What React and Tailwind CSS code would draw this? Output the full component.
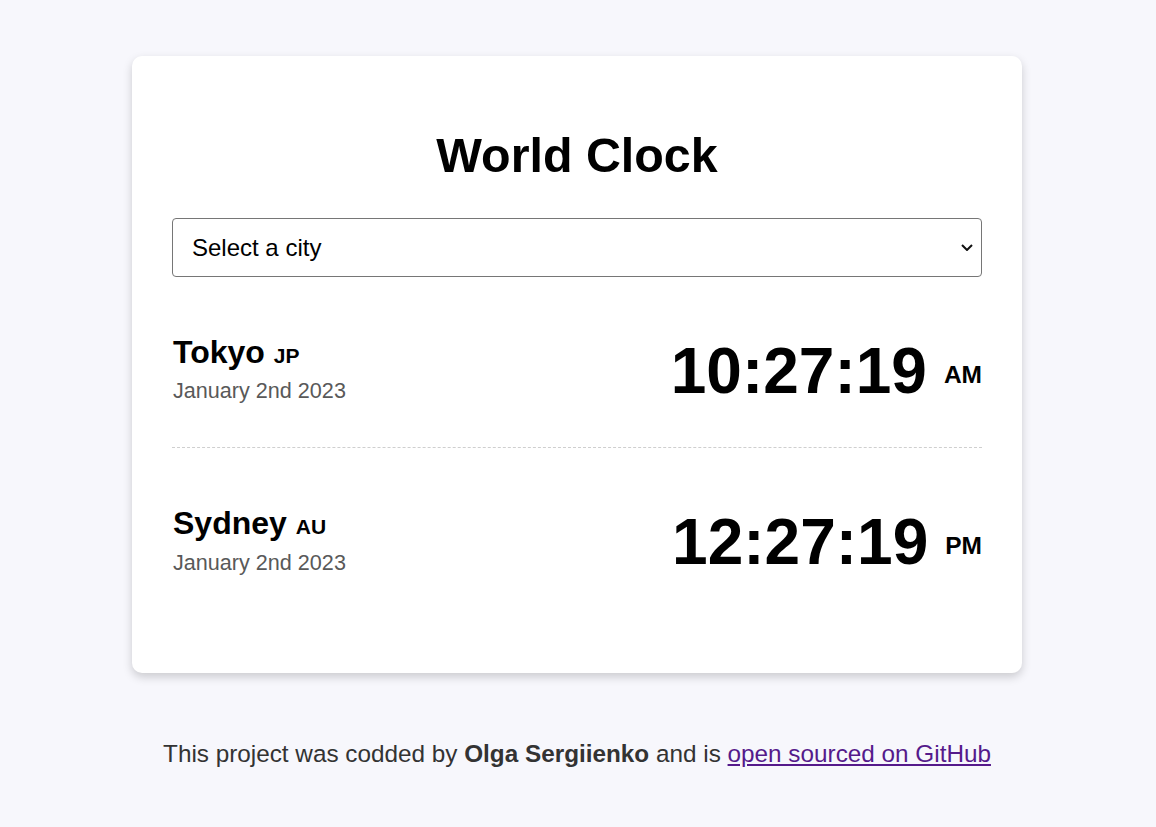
import { useState } from "react"

const cities = [
  { name: "Tokyo", code: "JP", date: "January 2nd 2023", time: "10:27:19", ampm: "AM" },
  { name: "Sydney", code: "AU", date: "January 2nd 2023", time: "12:27:19", ampm: "PM" },
]

function CityRow({ city, last }) {
  return (
    <div
      className={
        "flex items-center justify-between pt-[56px] " +
        (last ? "pb-[43px]" : "pb-[43px] border-b border-dashed border-[#cfcfcf]")
      }
    >
      <div className="pl-[1px]">
        <div className="text-[32px] font-bold leading-[1.2] text-black">
          {city.name} <span className="text-[21px]">{city.code}</span>
        </div>
        <div className="mt-[7px] text-[21.6px] leading-[1.2] text-[#595959]">{city.date}</div>
      </div>
      <div className="pt-[4px] text-[64px] font-bold leading-none text-black whitespace-nowrap">
        {city.time}
        <span className="ml-[17px] text-[24.5px] align-[10px]">{city.ampm}</span>
      </div>
    </div>
  )
}

export default function App() {
  const [city, setCity] = useState("")

  return (
    <div className="min-h-screen bg-[#f7f7fc] pt-[56px] pr-[2px] font-['Liberation_Sans',Arial,sans-serif]">
      <div className="mx-auto w-[890px] rounded-[10px] bg-white px-[40px] pt-[70px] pb-[54px] shadow-[0_4px_10px_rgba(0,0,0,0.18)]">
        <h1 className="text-center text-[48.4px] font-bold leading-[1.2] text-black">World Clock</h1>
        <div className="relative mt-[34px]">
          <select
            value={city}
            onChange={(e) => setCity(e.target.value)}
            className="block h-[59px] w-full appearance-none rounded-[4px] border border-[#767676] bg-white px-[19px] text-[24px] text-black outline-none"
          >
            <option value="">Select a city</option>
            <option value="tokyo">Tokyo</option>
            <option value="sydney">Sydney</option>
          </select>
          <svg
            className="pointer-events-none absolute right-[9px] top-[26px]"
            width="12"
            height="7"
            viewBox="0 0 12 7"
            fill="none"
          >
            <path d="M1 1l5 5 5-5" stroke="#111" strokeWidth="2" />
          </svg>
        </div>
        {cities.map((c, i) => (
          <CityRow key={c.name} city={c} last={i === cities.length - 1} />
        ))}
      </div>
      <p className="mt-[66px] text-center text-[24.3px] leading-[1.2] text-[#333]">
        This project was codded by <strong className="font-bold">Olga Sergiienko</strong> and is{" "}
        <a href="#" className="text-[#551a8b] underline">
          open sourced on GitHub
        </a>
      </p>
    </div>
  )
}
